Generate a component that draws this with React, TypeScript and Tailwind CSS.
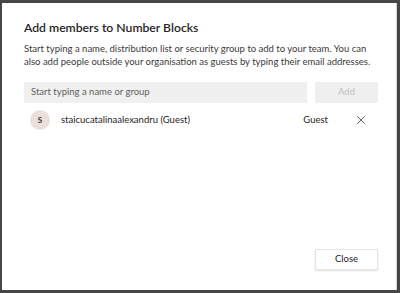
import { X } from 'lucide-react'

export default function App() {
  return (
    <div className="w-[400px] h-[293px] bg-[#464646] pt-[3px] pl-[2px] pr-[3px] pb-[3px] flex" style={{ fontFamily: 'Lato, "Noto Sans", sans-serif' }}>
      <div className="flex-1 bg-white border-r border-[#d8d8d8] flex flex-col pl-[22px] pr-[18px] pt-[17px] pb-[20px] text-[#252423]">
        <h2 className="text-[12.2px] font-semibold leading-[16px]">Add members to Number Blocks</h2>
        <p className="mt-[7px] text-[9.5px] leading-[12.5px] text-[#3b3a39]">
          Start typing a name, distribution list or security group to add to your team. You can also add people outside your organisation as guests by typing their email addresses.
        </p>

        {/* Search + add */}
        <div className="mt-[14px] flex gap-[8px]">
          <div className="flex-1 h-[21px] bg-[#f0f0f0] flex items-center px-[7px] text-[9.5px] text-[#605e5c]">
            Start typing a name or group
          </div>
          <button className="w-[63px] h-[21px] bg-[#efefef] text-[9.5px] text-[#bdbdbd]">Add</button>
        </div>

        {/* Member */}
        <div className="mt-[5px] flex items-center h-[24px]">
          <div className="ml-[6px] w-[20px] h-[20px] rounded-full bg-[#ebdfdb] flex items-center justify-center text-[8px] font-bold text-[#3f302b]">S</div>
          <span className="ml-[11px] text-[9.5px] text-[#252423]">staicucatalinaalexandru (Guest)</span>
          <span className="ml-auto text-[9.5px] text-[#252423]">Guest</span>
          <X className="ml-[26px] mr-[10px] w-[14px] h-[14px] text-[#484644]" strokeWidth={1.4} />
        </div>

        <div className="mt-auto flex justify-end">
          <button className="w-[63px] h-[21px] bg-white border border-[#e6e4e2] shadow-[0_1px_2px_rgba(0,0,0,0.12)] text-[9.5px] text-[#252423]">Close</button>
        </div>
      </div>
    </div>
  )
}
